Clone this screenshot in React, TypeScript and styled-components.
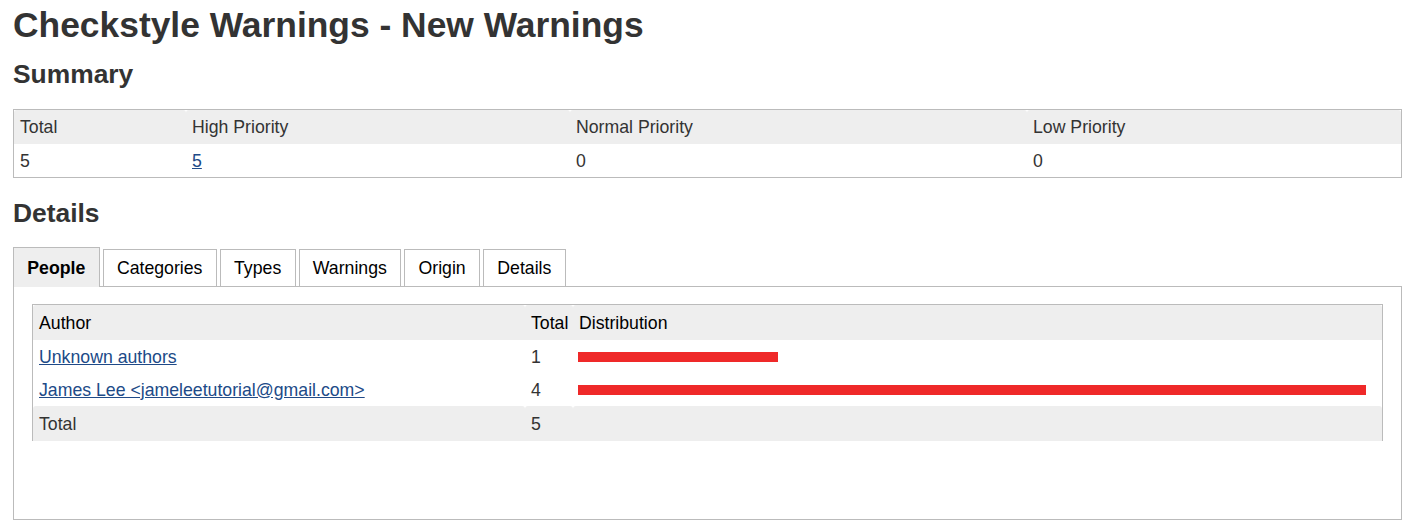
import React from "react";
import styled, { createGlobalStyle, css } from "styled-components";

const GlobalStyle = createGlobalStyle`
  * { box-sizing: border-box; }
  body {
    margin: 0;
    background: #fff;
    color: #333;
    font-family: "Liberation Sans", Arial, Helvetica, sans-serif;
    font-size: 17.7px;
    line-height: 20px;
  }
`;

const Page = styled.div`
  padding: 0 9px 0 13px;
`;

const Title = styled.h1`
  margin: 5px 0 14px 0;
  font-size: 35.4px;
  line-height: 40px;
  font-weight: bold;
  color: #333;
`;

const SectionTitle = styled.h2<{ $gap: number }>`
  margin: 0 0 ${(p) => p.$gap}px 0;
  font-size: 26.4px;
  line-height: 30px;
  font-weight: bold;
  color: #333;
`;

const Table = styled.table<{ $openBottom?: boolean }>`
  width: 100%;
  table-layout: fixed;
  border-collapse: separate;
  border-spacing: 0;
  border: 1px solid #bbb;
  ${(p) =>
    p.$openBottom &&
    css`
      border-bottom: none;
    `}
`;

const SummaryTable = styled(Table)`
  margin-bottom: 20px;
`;

const HeadCell = styled.th<{ $w?: number; $dark?: boolean; $h?: number }>`
  background: #eee;
  text-align: left;
  font-weight: normal;
  color: ${(p) => (p.$dark ? "#000" : "#333")};
  padding: 0 6px;
  height: ${(p) => p.$h ?? 34}px;
  vertical-align: middle;
  border-radius: 3px 3px 0 0;
  white-space: nowrap;
  ${(p) =>
    p.$w !== undefined &&
    css`
      width: ${p.$w}px;
    `}
`;

const Cell = styled.td<{ $h?: number }>`
  padding: 0 6px;
  height: ${(p) => p.$h ?? 33}px;
  vertical-align: middle;
  text-align: left;
  color: #333;
  white-space: nowrap;
`;

const Link = styled.a`
  color: #204a87;
  text-decoration: underline;
`;

const TabBar = styled.div`
  display: flex;
  align-items: flex-end;
  gap: 3px;
  height: 39px;
`;

const Tab = styled.div<{ $active?: boolean }>`
  border: 1px solid #bbb;
  border-bottom: none;
  color: #000;
  padding: 0 13.3px;
  white-space: nowrap;
  ${(p) =>
    p.$active
      ? css`
          position: relative;
          z-index: 1;
          height: 40px;
          margin-bottom: -1px;
          padding-top: 10px;
          background: #eee;
          font-weight: bold;
        `
      : css`
          height: 37px;
          padding-top: 8px;
          background: #fff;
        `}
`;

const Panel = styled.div`
  border: 1px solid #bbb;
  height: 234px;
  padding: 17px 18px;
`;

const Bar = styled.div`
  height: 10px;
  margin: 1px 0 0 -1px;
  background: #ef2929;
`;

const summary = [
  { label: "Total", value: "5", width: 172, link: false },
  { label: "High Priority", value: "5", width: 384, link: true },
  { label: "Normal Priority", value: "0", width: 457, link: false },
  { label: "Low Priority", value: "0", width: undefined, link: false },
];

const tabs = ["People", "Categories", "Types", "Warnings", "Origin", "Details"];

const authors = [
  { name: "Unknown authors", count: 1, bar: 200 },
  { name: "James Lee <jameleetutorial@gmail.com>", count: 4, bar: 788 },
];

export default function App() {
  return (
    <>
      <GlobalStyle />
      <Page>
        <Title>Checkstyle Warnings - New Warnings</Title>
        <SectionTitle $gap={20}>Summary</SectionTitle>
        <SummaryTable>
          <thead>
            <tr>
              {summary.map((s) => (
                <HeadCell key={s.label} $w={s.width}>
                  {s.label}
                </HeadCell>
              ))}
            </tr>
          </thead>
          <tbody>
            <tr>
              {summary.map((s) => (
                <Cell key={s.label}>
                  {s.link ? <Link href="#high">{s.value}</Link> : s.value}
                </Cell>
              ))}
            </tr>
          </tbody>
        </SummaryTable>

        <SectionTitle $gap={19}>Details</SectionTitle>
        <TabBar role="tablist">
          {tabs.map((t, i) => (
            <Tab key={t} role="tab" $active={i === 0}>
              {t}
            </Tab>
          ))}
        </TabBar>
        <Panel role="tabpanel">
          <Table $openBottom>
            <thead>
              <tr>
                <HeadCell $w={492} $dark $h={35}>
                  Author
                </HeadCell>
                <HeadCell $w={48} $dark $h={35}>
                  Total
                </HeadCell>
                <HeadCell $dark $h={35}>
                  Distribution
                </HeadCell>
              </tr>
            </thead>
            <tbody>
              {authors.map((a) => (
                <tr key={a.name}>
                  <Cell>
                    <Link href="#author">{a.name}</Link>
                  </Cell>
                  <Cell>{a.count}</Cell>
                  <Cell>
                    <Bar style={{ width: a.bar }} />
                  </Cell>
                </tr>
              ))}
            </tbody>
            <tfoot>
              <tr>
                <HeadCell $h={35}>Total</HeadCell>
                <HeadCell $h={35}>5</HeadCell>
                <HeadCell $h={35} />
              </tr>
            </tfoot>
          </Table>
        </Panel>
      </Page>
    </>
  );
}
